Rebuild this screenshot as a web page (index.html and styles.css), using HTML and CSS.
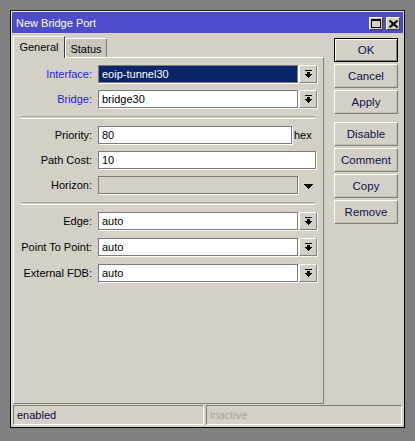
FILE: index.html
```html
<!DOCTYPE html>
<html>
<head>
<meta charset="utf-8">
<link rel="stylesheet" href="styles.css">
</head>
<body>
<div class="window">
  <div class="titlebar">
    <span class="title">New Bridge Port</span>
    <div class="tbtns">
      <span class="tbtn"><svg width="10" height="9" viewBox="0 0 10 9"><rect x="0" y="0" width="10" height="2" fill="#000"/><rect x="0" y="0" width="1" height="9" fill="#000"/><rect x="9" y="0" width="1" height="9" fill="#000"/><rect x="0" y="8" width="10" height="1" fill="#000"/></svg></span>
      <span class="tbtn"><svg width="9" height="8" viewBox="0 0 9 8"><path d="M0.5 0.5 L8.5 7.5 M8.5 0.5 L0.5 7.5" stroke="#000" stroke-width="2" fill="none"/></svg></span>
    </div>
  </div>
  <div class="main">
    <div class="leftcol">
      <div class="tabs">
        <div class="tab active">General</div>
        <div class="tab">Status</div>
      </div>
      <div class="panel">
        <div class="group">
          <div class="row">
            <label class="lbl req">Interface:</label>
            <div class="field sel">eoip-tunnel30</div>
            <span class="dd"><svg width="7" height="8" viewBox="0 0 7 8"><rect x="0" y="0" width="7" height="1"/><rect x="2" y="2" width="3" height="2"/><rect x="0" y="4" width="7" height="1"/><rect x="1" y="5" width="5" height="1"/><rect x="2" y="6" width="3" height="1"/><rect x="3" y="7" width="1" height="1"/></svg></span>
          </div>
          <div class="row">
            <label class="lbl req">Bridge:</label>
            <div class="field">bridge30</div>
            <span class="dd"><svg width="7" height="8" viewBox="0 0 7 8"><rect x="0" y="0" width="7" height="1"/><rect x="2" y="2" width="3" height="2"/><rect x="0" y="4" width="7" height="1"/><rect x="1" y="5" width="5" height="1"/><rect x="2" y="6" width="3" height="1"/><rect x="3" y="7" width="1" height="1"/></svg></span>
          </div>
        </div>
        <div class="sep"></div>
        <div class="group">
          <div class="row">
            <label class="lbl">Priority:</label>
            <div class="field short">80</div>
            <span class="unit">hex</span>
          </div>
          <div class="row">
            <label class="lbl">Path Cost:</label>
            <div class="field wide">10</div>
          </div>
          <div class="row">
            <label class="lbl">Horizon:</label>
            <div class="field off"></div>
            <span class="tri"><svg width="9" height="5" viewBox="0 0 9 5"><rect x="0" y="0" width="9" height="1"/><rect x="1" y="1" width="7" height="1"/><rect x="2" y="2" width="5" height="1"/><rect x="3" y="3" width="3" height="1"/><rect x="4" y="4" width="1" height="1"/></svg></span>
          </div>
        </div>
        <div class="sep"></div>
        <div class="group g3">
          <div class="row">
            <label class="lbl">Edge:</label>
            <div class="field">auto</div>
            <span class="dd"><svg width="7" height="8" viewBox="0 0 7 8"><rect x="0" y="0" width="7" height="1"/><rect x="2" y="2" width="3" height="2"/><rect x="0" y="4" width="7" height="1"/><rect x="1" y="5" width="5" height="1"/><rect x="2" y="6" width="3" height="1"/><rect x="3" y="7" width="1" height="1"/></svg></span>
          </div>
          <div class="row">
            <label class="lbl">Point To Point:</label>
            <div class="field">auto</div>
            <span class="dd"><svg width="7" height="8" viewBox="0 0 7 8"><rect x="0" y="0" width="7" height="1"/><rect x="2" y="2" width="3" height="2"/><rect x="0" y="4" width="7" height="1"/><rect x="1" y="5" width="5" height="1"/><rect x="2" y="6" width="3" height="1"/><rect x="3" y="7" width="1" height="1"/></svg></span>
          </div>
          <div class="row">
            <label class="lbl">External FDB:</label>
            <div class="field">auto</div>
            <span class="dd"><svg width="7" height="8" viewBox="0 0 7 8"><rect x="0" y="0" width="7" height="1"/><rect x="2" y="2" width="3" height="2"/><rect x="0" y="4" width="7" height="1"/><rect x="1" y="5" width="5" height="1"/><rect x="2" y="6" width="3" height="1"/><rect x="3" y="7" width="1" height="1"/></svg></span>
          </div>
        </div>
      </div>
    </div>
    <div class="buttons">
      <div class="btn default">OK</div>
      <div class="btn">Cancel</div>
      <div class="btn">Apply</div>
      <div class="btn gap">Disable</div>
      <div class="btn">Comment</div>
      <div class="btn">Copy</div>
      <div class="btn">Remove</div>
    </div>
  </div>
  <div class="statusbar">
    <div class="sfield s1">enabled</div>
    <div class="sfield s2 dim">inactive</div>
  </div>
</div>
</body>
</html>
```

FILE: styles.css
```css
html, body {
  margin: 0;
  padding: 0;
}
body {
  background: #808080;
  width: 415px;
  height: 441px;
  overflow: hidden;
  font-family: "Liberation Sans", Arial, sans-serif;
  font-size: 11px;
  color: #000;
}
.window {
  margin: 10px 0 0 10px;
  width: 395px;
  box-sizing: border-box;
  border: 1px solid #000;
  border-top-color: #202020;
  padding: 1px 1px 2px 1px;
  background: #d4d0c8;
  box-shadow: inset 1px 1px 0 #e8e6e0;
}
.titlebar {
  height: 21px;
  background: #4d4dcc;
  display: flex;
  align-items: center;
  justify-content: space-between;
  padding: 0 3px 0 4px;
}
.title {
  color: #fff;
  font-size: 11px;
}
.tbtns {
  display: flex;
  gap: 3px;
  margin-top: 2px;
}
.tbtn {
  width: 14px;
  height: 13px;
  box-sizing: border-box;
  background: #d4d0c8;
  border: 1px solid;
  border-color: #fff #404040 #404040 #fff;
  display: flex;
  align-items: center;
  justify-content: center;
}
.main {
  display: flex;
  padding: 3px 0 0 1px;
}
.leftcol {
  width: 311px;
  display: flex;
  flex-direction: column;
}
.tabs {
  height: 21px;
  display: flex;
  align-items: flex-end;
}
.tab {
  box-sizing: border-box;
  height: 19px;
  width: 42px;
  background: #c9c5bd;
  border: 1px solid;
  border-color: #fff #808080 transparent #fff;
  border-bottom: 0;
  display: flex;
  align-items: center;
  justify-content: center;
  font-size: 11px;
  padding-top: 1px;
}
.tab.active {
  width: 52px;
  height: 22px;
  margin-bottom: -1px;
  background: #d4d0c8;
  position: relative;
  z-index: 1;
  border-right-color: #404040;
  padding-top: 0;
  padding-bottom: 2px;
}
.panel {
  height: 347px;
  box-sizing: border-box;
  border: 1px solid;
  border-color: #fff #808080 #808080 #fff;
  padding: 7px 0 0 0;
}
.group {
  display: flex;
  flex-direction: column;
  gap: 7px;
}
.group.g3 {
  gap: 8px;
  margin-top: 1px;
}
.row {
  display: flex;
  align-items: center;
  height: 18px;
}
.lbl {
  width: 78px;
  text-align: right;
  margin-right: 6px;
  white-space: nowrap;
}
.lbl.req {
  color: #2424dc;
}
.field {
  box-sizing: border-box;
  width: 200px;
  height: 18px;
  background: #fff;
  border: 1px solid #7c7c7c;
  box-shadow: 1px 1px 0 #fff;
  padding: 0 3px;
  line-height: 16px;
  white-space: nowrap;
  overflow: hidden;
}
.field.sel {
  background: #0a246a;
  color: #fff;
}
.field.short {
  width: 194px;
}
.field.wide {
  width: 218px;
}
.field.off {
  background: #d4d0c8;
}
.unit {
  margin-left: 2px;
}
.dd {
  box-sizing: border-box;
  width: 18px;
  height: 18px;
  margin-left: 1px;
  background: #d4d0c8;
  border: 1px solid;
  border-color: #fff #808080 #808080 #fff;
  box-shadow: 1px 1px 0 #f4f4f0;
  display: flex;
  align-items: center;
  justify-content: center;
}
.dd svg, .tri svg {
  fill: #000;
  display: block;
}
.tri {
  margin-left: 6px;
  margin-top: 2px;
}
.sep {
  margin: 8px 8px 7px 7px;
  height: 1px;
  border-top: 1px solid #a8a49c;
  border-bottom: 1px solid #fff;
}
.buttons {
  margin: 2px 0 0 10px;
  width: 64px;
  display: flex;
  flex-direction: column;
  gap: 2px;
}
.btn {
  box-sizing: border-box;
  height: 24px;
  border: 1px solid;
  border-color: #fff #808080 #808080 #fff;
  box-shadow: inset -1px -1px 0 #c0bcb4;
  display: flex;
  align-items: center;
  justify-content: center;
  font-size: 11.5px;
  color: #10104a;
}
.btn.default {
  border-color: #000;
  box-shadow: inset 1px 1px 0 #fff, inset -1px -1px 0 #808080;
}
.btn.gap {
  margin-top: 6px;
}
.statusbar {
  display: flex;
  gap: 2px;
  margin: 1px 0 0 1px;
}
.sfield {
  box-sizing: border-box;
  height: 20px;
  border: 1px solid;
  border-color: #808080 #fff #fff #808080;
  padding: 0 3px;
  line-height: 18px;
  font-size: 11px;
  color: #0a0a3a;
}
.s1 { width: 191px; }
.s2 { width: 196px; }
.sfield.dim { color: #a8a6a0; }
```
